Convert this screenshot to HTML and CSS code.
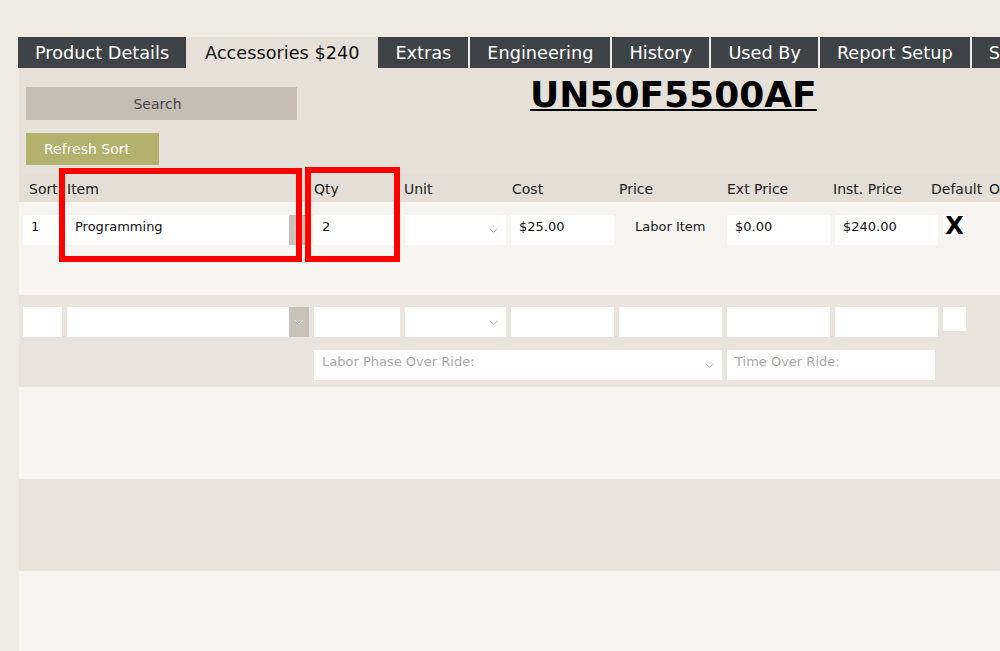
FILE: index.html
```html
<!DOCTYPE html>
<html lang="en">
<head>
  <meta charset="UTF-8">
  <meta name="viewport" content="width=device-width, initial-scale=1.0">
  <title>UN50F5500AF - Accessories</title>
  <link rel="stylesheet" href="styles.css">
</head>
<body>
  <div class="tabs">
    <div class="tab dark">Product Details</div>
    <div class="tab active">Accessories $240</div>
    <div class="tab dark">Extras</div>
    <div class="tab dark">Engineering</div>
    <div class="tab dark">History</div>
    <div class="tab dark">Used By</div>
    <div class="tab dark">Report Setup</div>
    <div class="tab dark">Settings</div>
  </div>

  <div class="panel">
    <div class="toolbar">
      <button class="search-btn">Search</button>
      <h1 class="title">UN50F5500AF</h1>
    </div>
    <button class="refresh-btn">Refresh Sort</button>

    <div class="head-row">
      <div>Sort</div>
      <div>Item</div>
      <div>Qty</div>
      <div>Unit</div>
      <div>Cost</div>
      <div>Price</div>
      <div>Ext Price</div>
      <div>Inst. Price</div>
      <div>Default</div>
      <div>Options</div>
    </div>

    <!-- existing item -->
    <div class="row light">
      <div class="field">1</div>
      <div class="field select">
        <span>Programming</span>
        <span class="arrow-box"><svg width="8" height="5" viewBox="0 0 8 5"><polyline points="0.5,0.5 4,4 7.5,0.5" fill="none" stroke="#ddd8d0" stroke-width="1"/></svg></span>
      </div>
      <div class="field">2</div>
      <div class="field select">
        <span></span>
        <svg class="chev" width="9" height="5" viewBox="0 0 9 5"><polyline points="0.5,0.5 4.5,4.5 8.5,0.5" fill="none" stroke="#c8c8c8" stroke-width="1"/></svg>
      </div>
      <div class="field">$25.00</div>
      <div class="plain">Labor Item</div>
      <div class="field">$0.00</div>
      <div class="field">$240.00</div>
      <div class="check checked">X</div>
    </div>

    <!-- new item entry -->
    <div class="row dark-band">
      <div class="field"></div>
      <div class="field select">
        <span></span>
        <span class="arrow-box"><svg width="8" height="5" viewBox="0 0 8 5"><polyline points="0.5,0.5 4,4 7.5,0.5" fill="none" stroke="#ffffff" stroke-width="1"/></svg></span>
      </div>
      <div class="field"></div>
      <div class="field select">
        <span></span>
        <svg class="chev" width="9" height="5" viewBox="0 0 9 5"><polyline points="0.5,0.5 4.5,4.5 8.5,0.5" fill="none" stroke="#c8c8c8" stroke-width="1"/></svg>
      </div>
      <div class="field"></div>
      <div class="field"></div>
      <div class="field"></div>
      <div class="field"></div>
      <div class="check small"></div>

      <div class="field select placeholder phase">
        <span>Labor Phase Over Ride:</span>
        <svg class="chev" width="9" height="5" viewBox="0 0 9 5"><polyline points="0.5,0.5 4.5,4.5 8.5,0.5" fill="none" stroke="#c8c8c8" stroke-width="1"/></svg>
      </div>
      <div class="field placeholder time">Time Over Ride:</div>
    </div>

    <div class="row blank light"></div>
    <div class="row blank dark-band"></div>
    <div class="row blank light"></div>
  </div>

  <!-- annotation boxes -->
  <div class="mark mark-item"></div>
  <div class="mark mark-qty"></div>
</body>
</html>
```

FILE: styles.css
```css
body {
  margin: 0;
  font-family: "DejaVu Sans", Verdana, sans-serif;
  background: #efebe5;
  color: #1a1a1a;
  overflow: hidden;
  position: relative;
  height: 651px;
}

.tabs {
  display: flex;
  margin-top: 37px;
  padding-left: 18px;
  white-space: nowrap;
}

.tab {
  height: 31px;
  line-height: 32px;
  padding: 0 17px;
  font-size: 17.7px;
  flex-shrink: 0;
}

.tab.dark {
  background: #404346;
  color: #ffffff;
}

.tab.dark + .tab.dark {
  margin-left: 2px;
}

.tab.active {
  background: #e5e1d9;
  color: #111;
  padding: 0 19px;
}

.panel {
  margin-left: 19px;
  background: #e5e1d9;
  min-height: 600px;
}

.toolbar {
  display: flex;
  align-items: flex-start;
  padding-left: 7px;
}

.search-btn {
  margin-top: 19px;
  width: 271px;
  height: 33px;
  border: none;
  background: #c4bdb3;
  color: #444;
  font-family: inherit;
  font-size: 14px;
  padding: 0 8px 0 0;
}

.title {
  margin: 6px 0 0 233px;
  font-size: 36px;
  line-height: 42px;
  font-weight: bold;
  text-decoration: underline;
  text-decoration-thickness: 2px;
  text-underline-offset: 2px;
  color: #000;
}

.refresh-btn {
  display: block;
  margin: 13px 0 0 7px;
  width: 133px;
  height: 32px;
  border: none;
  background: #b4b16d;
  color: #ffffff;
  font-family: inherit;
  font-size: 14px;
  text-align: left;
  padding: 0 0 0 18px;
}

.head-row {
  margin-top: 10px;
  height: 27px;
  display: grid;
  grid-template-columns: 38px 247px 90px 108px 107px 108px 106px 98px 58px 1fr;
  align-items: center;
  padding-left: 10px;
  background: #e3dfd7;
  font-size: 14px;
  color: #222;
  white-space: nowrap;
  overflow: hidden;
}

.row {
  display: grid;
  grid-template-columns: 39px 242px 86px 101px 103px 103px 103px 103px 23px;
  column-gap: 5px;
  row-gap: 13px;
  align-content: start;
  padding: 13px 0 0 4px;
  height: 80px;
}

.row.dark-band {
  padding-top: 12px;
}

.row.blank {
  height: 92px;
  padding: 0;
}

.light {
  background: #f6f5f2;
}

.dark-band {
  background: #e9e5de;
}

.field {
  height: 30px;
  background: #ffffff;
  font-size: 13px;
  line-height: 24px;
  padding-left: 8px;
  box-sizing: border-box;
  color: #111;
  white-space: nowrap;
}

.field.select {
  display: flex;
  justify-content: space-between;
  align-items: center;
  padding-right: 0;
}

.field.select > span:first-child {
  align-self: flex-start;
}

.field.select .chev {
  margin-right: 8px;
}

.arrow-box {
  width: 20px;
  height: 30px;
  background: #c9c2b8;
  display: flex;
  align-items: center;
  justify-content: center;
}

.placeholder {
  color: #a8a8a8;
}

.phase {
  grid-column: 3 / 7;
}

.time {
  grid-column: 7 / 9;
  margin-right: 3px;
}

.plain {
  font-size: 13px;
  line-height: 24px;
  padding-left: 16px;
  white-space: nowrap;
}

.check {
  width: 23px;
  background: #ffffff;
  box-sizing: border-box;
}

.check.checked {
  height: 22px;
  font-size: 24px;
  font-weight: bold;
  line-height: 23px;
  text-align: center;
  color: #000;
}

.check.small {
  height: 24px;
}

.mark {
  position: absolute;
  border: 6px solid #ff0000;
  box-sizing: border-box;
}

.mark-item {
  left: 59px;
  top: 168px;
  width: 243px;
  height: 94px;
}

.mark-qty {
  left: 305px;
  top: 167px;
  width: 95px;
  height: 95px;
}
```
